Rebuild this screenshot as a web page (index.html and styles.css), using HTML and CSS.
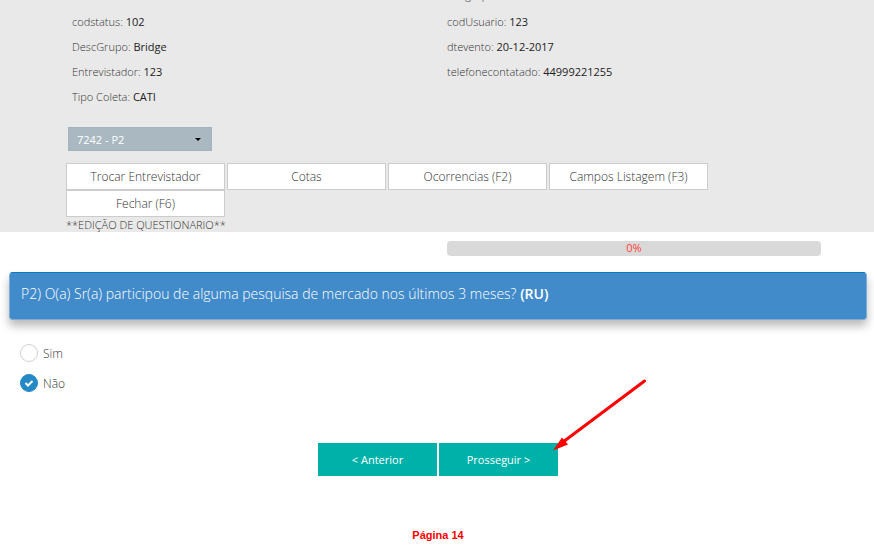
FILE: index.html
```html
<!DOCTYPE html>
<html lang="pt-BR">
<head>
<meta charset="utf-8">
<meta name="viewport" content="width=device-width, initial-scale=1">
<title>Questionario</title>
<link rel="stylesheet" href="styles.css">
</head>
<body>
<header class="panel">
  <div class="info">
    <dl class="info-col">
      <div class="info-row"><dt>codCliente:</dt> <dd>2004421</dd></div>
      <div class="info-row"><dt>codstatus:</dt> <dd>102</dd></div>
      <div class="info-row"><dt>DescGrupo:</dt> <dd>Bridge</dd></div>
      <div class="info-row"><dt>Entrevistador:</dt> <dd>123</dd></div>
      <div class="info-row"><dt>Tipo Coleta:</dt> <dd>CATI</dd></div>
    </dl>
    <dl class="info-col">
      <div class="info-row"><dt>codgrupo:</dt> <dd>0</dd></div>
      <div class="info-row"><dt>codUsuario:</dt> <dd>123</dd></div>
      <div class="info-row"><dt>dtevento:</dt> <dd>20-12-2017</dd></div>
      <div class="info-row"><dt>telefonecontatado:</dt> <dd>44999221255</dd></div>
    </dl>
  </div>
  <div class="picker">
    <select class="picker-select" aria-label="Pergunta"><option>7242 - P2</option></select>
    <svg class="picker-caret" viewBox="0 0 6 3" aria-hidden="true"><path d="M0 0h6L3 3z"/></svg>
  </div>
  <div class="tools">
    <button class="tool" type="button">Trocar Entrevistador</button>
    <button class="tool" type="button">Cotas</button>
    <button class="tool" type="button">Ocorrencias (F2)</button>
    <button class="tool" type="button">Campos Listagem (F3)</button>
    <button class="tool" type="button">Fechar (F6)</button>
  </div>
  <p class="mode">**EDIÇÃO DE QUESTIONARIO**</p>
</header>
<main class="survey">
  <div class="progress" role="progressbar" aria-label="Progresso" aria-valuenow="0" aria-valuemin="0" aria-valuemax="100">0%</div>
  <h1 class="question">P2) O(a) Sr(a) participou de alguma pesquisa de mercado nos últimos 3 meses? <b>(RU)</b></h1>
  <div class="answers" role="radiogroup" aria-label="Resposta">
    <label class="answer"><input class="radio" type="radio" name="p2"><span>Sim</span></label>
    <label class="answer"><input class="radio" type="radio" name="p2" checked><svg class="check" viewBox="0 0 18 18" aria-hidden="true"><path d="M5.500 9l2.500 2.500 4.500-4.500"/></svg><span>Não</span></label>
  </div>
  <div class="nav">
    <button class="nav-button" type="button">&lt; Anterior</button>
    <div class="nav-next">
      <button class="nav-button" type="button">Prosseguir &gt;</button>
      <svg class="arrow" viewBox="0 0 94 72" aria-hidden="true"><path class="arrow-line" d="M91.500 2L10 63"/><path class="arrow-head" d="M0 71.500L9 58.500 15 65.500z"/></svg>
    </div>
  </div>
  <p class="page">Página 14</p>
</main>
</body>
</html>
```
FILE: styles.css
```css
* { box-sizing: border-box; }

body {
  margin: 0;
  background: #fff;
  color: #333;
  font-family: "Open Sans", sans-serif;
  font-size: 12px;
  font-weight: 300;
}

button, select { font-family: inherit; font-weight: inherit; }

.panel {
  background: #e9e9e9;
  padding: 0 52px 0 66px;
  overflow: hidden;
}

.info {
  display: grid;
  grid-template-columns: 1fr 1fr;
  margin-top: -17px;
  padding-left: 6px;
}

.info-col { margin: 0; }

.info-row {
  line-height: 25px;
  white-space: nowrap;
  font-size: 11px;
}

.info-row:first-child { margin-bottom: 3px; line-height: 23px; }

.info-row dt, .info-row dd { display: inline; margin: 0; }
.info-row dt { color: #333; }
.info-row dd { color: #222; font-weight: 400; }

.picker {
  position: relative;
  width: 144px;
  margin: 18px 2px 12px;
}

.picker-select {
  display: block;
  width: 100%;
  height: 24px;
  padding: 0 8px;
  appearance: none;
  border: 1px solid #a3b4be;
  border-radius: 0;
  background: #aab8c2;
  color: #fff;
  font-size: 11px;
  font-weight: 400;
}

.picker-caret {
  position: absolute;
  top: 11px;
  right: 11px;
  width: 6px;
  height: 3px;
}

.tools {
  display: flex;
  flex-wrap: wrap;
  column-gap: 2px;
}

.tool {
  width: 159px;
  height: 27px;
  padding: 0;
  border: 1px solid #ccc;
  background: #fff;
  color: #333;
  font-size: 12px;
}

.mode {
  margin: 0;
  font-size: 11px;
  line-height: 15px;
}

.survey { padding: 9px 7px 0 9px; }

.progress {
  width: 374px;
  height: 15px;
  margin: 0 46px 16px auto;
  border-radius: 4px;
  background: #d9d9d9;
  color: #ff4038;
  font-size: 11px;
  font-weight: 400;
  line-height: 14px;
  text-align: center;
}

.question {
  margin: 0;
  padding: 11px 11px 15px;
  border: 1px solid #7fabd5;
  border-top-color: #0779bd;
  border-radius: 4px;
  background: #428bca;
  box-shadow: 0 6px 10px rgba(0, 0, 0, .28);
  color: #fff;
  font-size: 14px;
  font-weight: 300;
  line-height: 20px;
}

.question b { font-weight: 600; }

.answers {
  display: grid;
  gap: 12px;
  margin: 24px 11px 51px;
  justify-items: start;
}

.answer {
  position: relative;
  display: flex;
  align-items: center;
  gap: 5px;
  height: 18px;
}

.radio {
  width: 18px;
  height: 18px;
  margin: 0;
  appearance: none;
  border: 1px solid #d3d1cb;
  border-radius: 50%;
  background: #fff;
}

.radio:checked { border-color: #2489c5; background: #2489c5; }

.check {
  position: absolute;
  left: 0;
  width: 18px;
  height: 18px;
  fill: none;
  stroke: #fff;
  stroke-width: 2;
}

.nav { display: flex; justify-content: center; gap: 2px; }

.nav-next { position: relative; }

.nav-button {
  display: block;
  width: 119px;
  height: 33px;
  padding: 0;
  border: 0;
  background: #00b1aa;
  color: #fff;
  font-size: 11px;
  font-weight: 400;
}

.arrow {
  position: absolute;
  left: 114px;
  top: -64px;
  width: 94px;
  height: 72px;
}

.arrow-line { stroke: #f00; stroke-width: 3; stroke-linecap: round; }
.arrow-head { fill: #f00; }

.page {
  margin: 52px 0 0;
  color: #f00;
  font: bold 11px/15px "Liberation Sans", sans-serif;
  text-align: center;
}
```
